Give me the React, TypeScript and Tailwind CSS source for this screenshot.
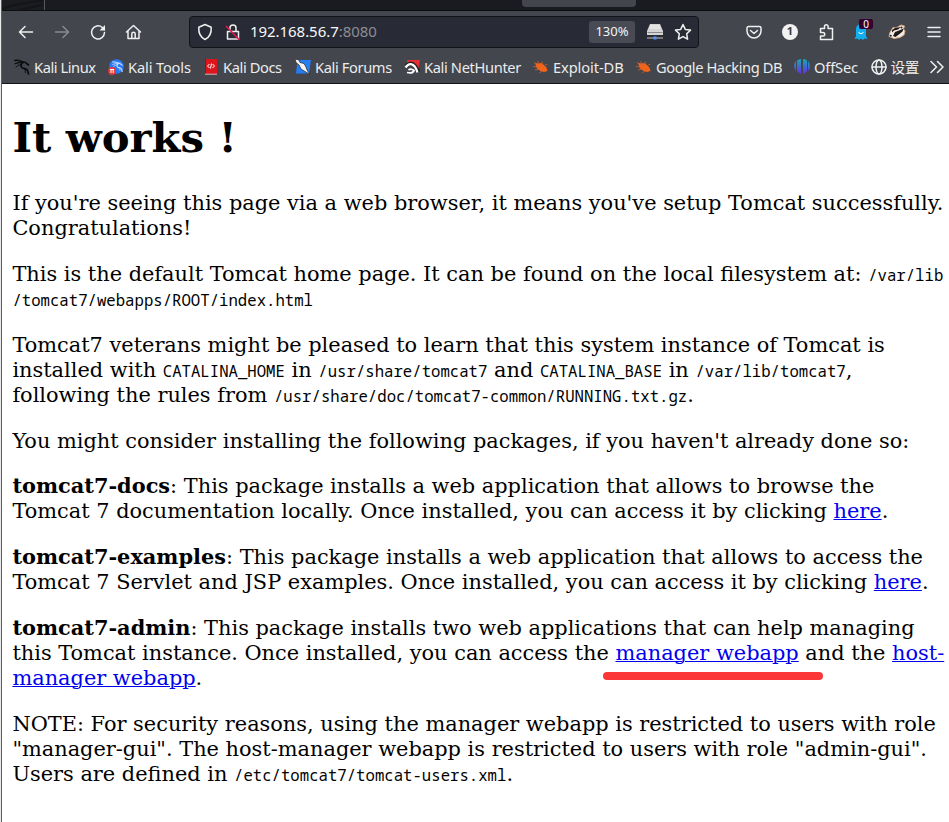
import React from "react";

const Code = ({ children }: { children: React.ReactNode }) => (
  <code className="font-['Noto_Sans_Mono','DejaVu_Sans_Mono',monospace] text-[15.66px] leading-none">{children}</code>
);
const Link = ({ children }: { children: React.ReactNode }) => (
  <a href="#" className="text-[#0000ee] underline decoration-1">{children}</a>
);
const B = ({ children }: { children: React.ReactNode }) => <b className="leading-none">{children}</b>;
const P = ({ children }: { children: React.ReactNode }) => <p className="mb-[21px]">{children}</p>;
const L = ({ children }: { children: React.ReactNode }) => <span className="block h-[25px]">{children}</span>;

const line = { fill: "none", stroke: "#f0f0f0", strokeWidth: 1.5, strokeLinecap: "round", strokeLinejoin: "round" } as const;

const Mark = ({ w, icon, label }: { w: string; icon: React.ReactNode; label: string }) => (
  <div className={"flex shrink-0 items-center gap-1 " + w}>
    <svg width="16" height="16" viewBox="0 0 16 16" className="shrink-0">{icon}</svg>
    <span>{label}</span>
  </div>
);

const bug = (
  <g>
    <path fill="#f3641b" d="M2 4l3.500.5L8 4l3 2 2.500 2.500 1 3.500-3.500 1-3.500-1L4 9.500 3 7z" />
    <path d="M1 3.500l4 2M4.500 2l2 4M0 7.500l5 .5M9 2.500l.5 4M2 11l5-1M12 6l2.500-1M6 14l3-2" stroke="#d9632a" strokeWidth=".7" fill="none" />
  </g>
);

const Dragon = ({ color }: { color: string }) => (
  <g fill="none" stroke={color} strokeLinecap="round">
    <path d="M.8 1.500Q5 .8 9 3.200" strokeWidth="1.500" />
    <path d="M1 4.800Q5 3 8.500 4" strokeWidth="1.200" />
    <path d="M2 8Q4 5.500 7 5.500" strokeWidth="1" />
    <path d="M8 3.200q3-.8 4.500 1.300l2 1.500" strokeWidth="1.600" />
    <path d="M8.500 4Q5.500 7 8.500 9q4 .5 5 2.500.6 1.500 1 3.500" strokeWidth="1.700" />
    <path d="M9.500 9.500q2.500 1.500 2 4" strokeWidth="1" />
  </g>
);

export default function App() {
  return (
    <div className="h-[822px] w-[949px] overflow-hidden border-l border-[#e8e8e8] bg-white">
      <div className="flex h-full flex-col border-l border-[#5d5f63]">
        <div className="flex h-[11px] shrink-0 border-b border-[#0d0e11] bg-[#1a1b20]">
          <div className="h-[10px] w-[43px] border-r border-[#55575c] bg-[#1b1c20]">
            <svg width="42" height="10" className="block"><path d="M0 9L12 5 42 0M18 10L40 5" stroke="#141518" strokeWidth="2" fill="none" /></svg>
          </div>
          <div className="ml-[477px] h-[7px] w-[114px] rounded-b bg-[#43464d]" />
        </div>
        <div className="flex h-[41px] shrink-0 items-center bg-[#43464d]">
          <div className="flex w-[187px] items-center gap-[16px] pl-[14px]">
            <svg width="20" height="20" viewBox="0 0 20 20"><path {...line} d="M16.500 10H4M9 4.500L3.500 10 9 15.500" /></svg>
            <svg width="20" height="20" viewBox="0 0 20 20" opacity=".4"><path {...line} d="M3.500 10H16M11 4.500l5.500 5.500L11 15.500" /></svg>
            <svg width="20" height="20" viewBox="0 0 20 20"><path {...line} d="M16.500 10.500a6.500 6.500 0 1 1-2.200-5L16.500 7.500" /><path d="M17 3v5.500h-5.500z" fill="#f0f0f0" /></svg>
            <svg width="20" height="20" viewBox="0 0 20 20"><path {...line} d="M2.500 10L9.500 3.500l7 6.500M4 9v7.500h11V9M7.800 16.500V12a1.700 1.700 0 0 1 3.400 0v4.500" /></svg>
          </div>
          <div className="flex h-8 w-[510px] items-center rounded border border-[#121318] bg-[#282a35]">
            <svg width="18" height="18" viewBox="0 0 18 18" className="ml-[6px]"><path {...line} d="M9 1.500l6.200 2.700C15.600 10 13 14.500 9 16.500 5 14.500 2.400 10 2.800 4.200z" /></svg>
            <svg width="18" height="18" viewBox="0 0 18 18" className="ml-[10px]"><path {...line} strokeLinecap="butt" d="M3.500 8.500h11v7.500h-11zM6 8V5a3 3 0 0 1 6 0v3" /><path d="M2 3l13.500 14" stroke="#e3194f" strokeWidth="1.600" /></svg>
            <div className="ml-[8px] w-[339px] text-[15px] tracking-[-0.05px] text-[#f8f8f8] font-['Noto_Sans',sans-serif]">192.168.56.7<span className="text-[#8d8e95]">:8080</span></div>
            <div className="flex h-[22px] w-[46px] items-center justify-center rounded-[3px] bg-[#484b54] text-[13px] text-[#f4f4f4] font-['Noto_Sans',sans-serif]">130%</div>
            <svg width="18" height="18" viewBox="0 0 18 18" className="ml-[11px]"><path fill="#d4d4d4" d="M4 1h10l3 7v4H1V8z" /><path d="M1.500 9.500h15" stroke="#888" /><path d="M4 3h10M3.500 5h11" stroke="#f2f2f2" /><path d="M1 15h16" stroke="#777" strokeWidth="2" /><rect x="7.500" y="13.500" width="3" height="3" fill="#5295ff" /></svg>
            <svg width="18" height="18" viewBox="0 0 18 18" className="ml-[10px]"><path {...line} d="M9 1.500l2.300 4.900 5.200.7-3.800 3.700.9 5.400L9 13.600l-4.600 2.600.9-5.400L1.500 7.100l5.200-.7z" /></svg>
          </div>
          <div className="flex items-center pl-[47px]">
            <svg width="16" height="16" viewBox="0 0 16 16"><path {...line} d="M2.500 2.500h11a1.500 1.500 0 0 1 1.500 1.500v3a7 7 0 0 1-14 0V4a1.500 1.500 0 0 1 1.500-1.500zM4.500 6.500L8 9.500l3.500-3" /></svg>
            <div className="ml-5 flex h-4 w-4 items-center justify-center rounded-full bg-[#f2f2f2] text-[11px] font-bold text-[#3a3c42] font-['Noto_Sans',sans-serif]">1</div>
            <svg width="18" height="18" viewBox="0 0 18 18" className="ml-[20px]"><path {...line} d="M2.500 5.500h4V3.500a1.800 1.800 0 0 1 3.600 0v2H14.500v11h-12v-3.500H5a1.600 1.600 0 0 0 0-3.500H2.500z" /></svg>
            <div className="relative ml-[17px] h-5 w-5">
              <svg width="16" height="18" viewBox="0 0 16 18" className="mt-px"><path fill="#12aef0" d="M3 6a5 5 0 0 1 10 0v7l1.500 3-3-.5-1.500 1.500-2-1.500-2 1.500-1.500-1.500-3 .5L3 13z" /><path d="M5.500 9.500q2.500 2.500 5 0" stroke="#fff" fill="none" /></svg>
              <div className="absolute left-[6px] top-[-3px] flex h-[10px] w-[14px] items-center justify-center rounded-[2px] bg-[#35002f] text-[10px] leading-none text-white font-['Noto_Sans',sans-serif]">0</div>
            </div>
            <svg width="18" height="16" viewBox="0 0 18 16" className="ml-[15px]">
              <path fill="#f3ece6" stroke="#d9a77f" d="M1 12.500l1-4 3-5 3 .5 5-3 3.500 1-1 3 1.500 2-1 4-4 2.500-6 1z" />
              <path fill="#1e1a19" d="M4 6l3-2 6-1-3 2.500-4 1-2 2zM5 12l2-4 4-1.500 4.500-2-1 3-3 2.500-4 3z" />
              <circle cx="13.500" cy="3.500" r="1" fill="#222" />
              <circle cx="2.800" cy="11.800" r="1" fill="#222" />
            </svg>
            <svg width="14" height="14" viewBox="0 0 14 14" className="ml-[21px]"><path {...line} d="M1 2.500h12M1 7h12M1 11.500h12" /></svg>
          </div>
        </div>
        <div className="flex h-[32px] shrink-0 items-center border-b border-[#141519] bg-[#43464d] pb-px pl-[12px] text-[14.670px] whitespace-nowrap text-[#ececec] font-['Noto_Sans','Noto_Sans_CJK_SC',sans-serif]">
          <Mark w="w-[94px] tracking-[-0.43px]" label="Kali Linux" icon={<Dragon color="#0c0c0d" />} />
          <Mark w="w-[95px] tracking-[-0.15px]" label="Kali Tools" icon={<><circle cx="8.500" cy="7.500" r="7.300" fill="#2778f4" /><g transform="translate(4 2) scale(.7)"><Dragon color="#c9defd" /></g><circle cx="4" cy="12" r="3.900" fill="#e43838" /><path d="M2 10.500h4.200M3 10.500v3.500M5.200 10.500v3.500" stroke="#fff" /></>} />
          <Mark w="w-[92px] tracking-[-0.4px]" label="Kali Docs" icon={<><path fill="#dc161c" d="M2 0h12v15H2z" /><path d="M2.500 0v15" stroke="#72202c" /><path d="M2 15.200h12" stroke="#d5b6b6" /><path d="M6.500 5l-2 2 2 2M9.500 5l2 2-2 2M8.500 4.500l-1 5" stroke="#fff" fill="none" /></>} />
          <Mark w="w-[109px] tracking-[-0.38px]" label="Kali Forums" icon={<><path fill="#247df2" d="M2.500 1H16l-2 13.500H1z" /><path fill="#f4f4f4" stroke="#222" strokeWidth=".7" d="M0 0l4 1 1 2.500 4 1 2 3.500 1 3 3 4.500-5-3-4-2.500-2-4-3-2.500z" /></>} />
          <Mark w="w-[129px] tracking-[-0.36px]" label="Kali NetHunter" icon={<><path fill="#e82d33" d="M3 1h13l-2 11-6-7-5 1z" /><path d="M2 7q5-5 9 0l4 6" stroke="#282326" strokeWidth="4" fill="none" /><path d="M1.500 8.500Q5 3.500 9 6q3 2 4.500 7.500" stroke="#fff" strokeWidth="2.200" fill="none" /><path d="M3 13.500q6 1.500 7-2-3-2.500-5.500-.5" stroke="#fff" strokeWidth="1.800" fill="none" /></>} />
          <Mark w="w-[103px] tracking-[-0.1px]" label="Exploit-DB" icon={bug} />
          <Mark w="w-[158px] tracking-[-0.41px]" label="Google Hacking DB" icon={bug} />
          <Mark w="w-[76.5px] tracking-[-0.15px]" label="OffSec" icon={<><defs><linearGradient id="off" x1="0" y1="0" x2="0" y2="16" gradientUnits="userSpaceOnUse"><stop stopColor="#16a8b7" /><stop offset="1" stopColor="#6c27e5" /></linearGradient></defs><path fill="url(#off)" d="M0 7q0-3 2-5v10Q0 10 0 7zM3 1.500Q5 0 7 0v15q-3-1-4-3zM9 0q3 0 4 1.500V12q-1 2-4 3zM14 2q2 2 2 5t-2 5z" /></>} />
          <Mark w="w-[59.5px] tracking-[-0.3px]" label="设置" icon={<g {...line}><circle cx="8" cy="8" r="7" /><ellipse cx="8" cy="8" rx="3" ry="7" /><path d="M1 8h14" /></g>} />
          <svg width="14" height="14" viewBox="0 0 14 14" className="shrink-0"><path {...line} d="M1 1.500L6.500 7 1 12.500M7.500 1.500L13 7l-5.500 5.500" /></svg>
        </div>
        <main className="relative flex-1 pl-[10.400px] text-[20.880px] leading-[25px] whitespace-nowrap text-black font-['DejaVu_Serif',serif]">
          <h1 className="mt-[29px] mb-[29px] h-[49px] text-[41.740px] leading-[49px] font-bold">It works !</h1>
          <P><L>If you're seeing this page via a web browser, it means you've setup Tomcat successfully.</L><L>Congratulations!</L></P>
          <P><L>This is the default Tomcat home page. It can be found on the local filesystem at: <Code>/var/lib</Code></L><L><Code>/tomcat7/webapps/ROOT/index.html</Code></L></P>
          <P><L>Tomcat7 veterans might be pleased to learn that this system instance of Tomcat is</L><L>installed with <Code>CATALINA_HOME</Code> in <Code>/usr/share/tomcat7</Code> and <Code>CATALINA_BASE</Code> in <Code>/var/lib/tomcat7</Code>,</L><L>following the rules from <Code>/usr/share/doc/tomcat7-common/RUNNING.txt.gz</Code>.</L></P>
          <p className="mb-5"><L>You might consider installing the following packages, if you haven't already done so:</L></p>
          <P><L><B>tomcat7-docs</B>: This package installs a web application that allows to browse the</L><L>Tomcat 7 documentation locally. Once installed, you can access it by clicking <Link>here</Link>.</L></P>
          <P><L><B>tomcat7-examples</B>: This package installs a web application that allows to access the</L><L>Tomcat 7 Servlet and JSP examples. Once installed, you can access it by clicking <Link>here</Link>.</L></P>
          <P><L><B>tomcat7-admin</B>: This package installs two web applications that can help managing</L><L>this Tomcat instance. Once installed, you can access the <Link>manager webapp</Link> and the <Link>host-</Link></L><L><Link>manager webapp</Link>.</L></P>
          <P><L>NOTE: For security reasons, using the manager webapp is restricted to users with role</L><L>"manager-gui". The host-manager webapp is restricted to users with role "admin-gui".</L><L>Users are defined in <Code>/etc/tomcat7/tomcat-users.xml</Code>.</L></P>
          <div className="absolute left-[600.500px] top-[588px] h-[8px] w-[220px] rounded-full bg-[#fb3737]" />
        </main>
      </div>
    </div>
  );
}
